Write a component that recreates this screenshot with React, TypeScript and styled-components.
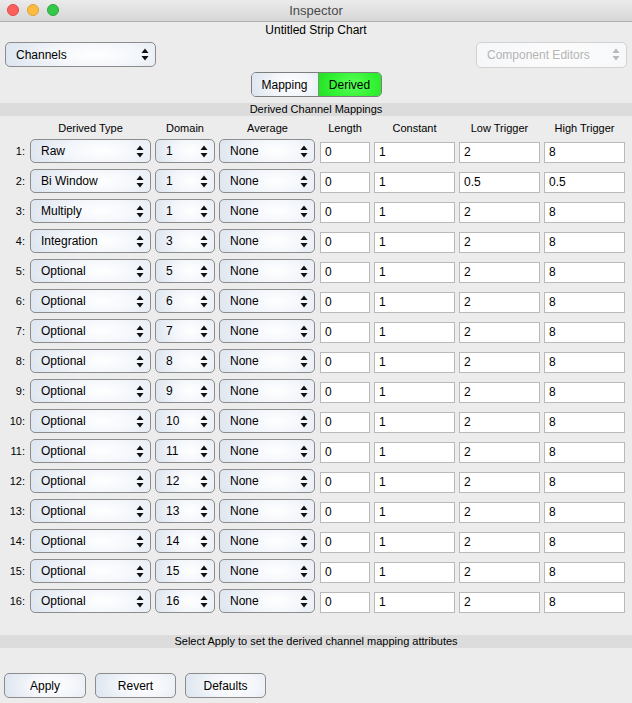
import styled, { createGlobalStyle } from 'styled-components';

const GlobalStyle = createGlobalStyle`
  html, body {
    margin: 0;
    padding: 0;
    background: #ececec;
  }
  body {
    font-family: "Liberation Sans", Arial, Helvetica, sans-serif;
    color: #000;
  }
`;

type Row = {
  type: string;
  domain: string;
  low: string;
  high: string;
};

const rows: Row[] = [
  { type: 'Raw', domain: '1', low: '2', high: '8' },
  { type: 'Bi Window', domain: '1', low: '0.5', high: '0.5' },
  { type: 'Multiply', domain: '1', low: '2', high: '8' },
  { type: 'Integration', domain: '3', low: '2', high: '8' },
  ...Array.from({ length: 12 }, (_, i) => ({
    type: 'Optional',
    domain: String(i + 5),
    low: '2',
    high: '8',
  })),
];

const Arrows = ({ disabled }: { disabled?: boolean }) => (
  <ArrowIcon viewBox="0 0 8 13" $disabled={disabled}>
    <path d="M4 0.5 L7.5 5 H0.5 Z" />
    <path d="M4 12.5 L7.5 8 H0.5 Z" />
  </ArrowIcon>
);

const Popup = ({
  label,
  width,
  height = 24,
  disabled,
}: {
  label: string;
  width: number;
  height?: number;
  disabled?: boolean;
}) => (
  <PopupBox $width={width} $height={height} $disabled={disabled}>
    <span>{label}</span>
    <Arrows disabled={disabled} />
  </PopupBox>
);

const App = () => {
  return (
    <>
      <GlobalStyle />
      <Window>
        <TitleBar>
          <Lights>
            <Light $color="#fc605c" $border="#de4a46" />
            <Light $color="#fdbc40" $border="#dea032" />
            <Light $color="#34c84a" $border="#27aa37" />
          </Lights>
          <WindowTitle>Inspector</WindowTitle>
        </TitleBar>

        <ChartName>Untitled Strip Chart</ChartName>

        <TopBar>
          <Popup label="Channels" width={151} height={25} />
          <Popup label="Component Editors" width={151} height={26} disabled />
        </TopBar>

        <SegmentRow>
          <Segmented>
            <Segment>Mapping</Segment>
            <Segment $active>Derived</Segment>
          </Segmented>
        </SegmentRow>

        <Band>Derived Channel Mappings</Band>

        <Table>
          <span />
          <HeaderCell>Derived Type</HeaderCell>
          <HeaderCell>Domain</HeaderCell>
          <HeaderCell>Average</HeaderCell>
          <HeaderCell>Length</HeaderCell>
          <HeaderCell>Constant</HeaderCell>
          <HeaderCell>Low Trigger</HeaderCell>
          <HeaderCell>High Trigger</HeaderCell>

          {rows.map((r, i) => (
            <Line key={i}>
              <RowLabel>{i + 1}:</RowLabel>
              <Popup label={r.type} width={121} />
              <Popup label={r.domain} width={60} />
              <Popup label="None" width={96} />
              <Field>0</Field>
              <Field>1</Field>
              <Field>{r.low}</Field>
              <Field>{r.high}</Field>
            </Line>
          ))}
        </Table>

        <Band $bottom>Select Apply to set the derived channel mapping attributes</Band>

        <Buttons>
          <Button $width={82}>Apply</Button>
          <Button $width={81}>Revert</Button>
          <Button $width={81}>Defaults</Button>
        </Buttons>
      </Window>
    </>
  );
};

export default App;

const Window = styled.div`
  width: 632px;
  height: 703px;
  background: #ececec;
  display: flex;
  flex-direction: column;
  overflow: hidden;
`;

const TitleBar = styled.div`
  height: 21px;
  flex-shrink: 0;
  position: relative;
  display: flex;
  align-items: center;
  justify-content: center;
  background: linear-gradient(to bottom, #ebebeb, #d6d6d6);
  border-bottom: 1px solid #b1b1b1;
`;

const Lights = styled.div`
  position: absolute;
  left: 7px;
  top: 4px;
  display: flex;
  gap: 8px;
`;

const Light = styled.div<{ $color: string; $border: string }>`
  box-sizing: border-box;
  width: 12px;
  height: 12px;
  border-radius: 50%;
  background: ${p => p.$color};
  border: 0.5px solid ${p => p.$border};
`;

const WindowTitle = styled.div`
  font-size: 13px;
  color: #4a4a4a;
`;

const ChartName = styled.div`
  text-align: center;
  font-size: 12px;
  height: 16px;
  line-height: 16px;
  flex-shrink: 0;
`;

const TopBar = styled.div`
  display: flex;
  justify-content: space-between;
  align-items: center;
  margin-top: 3px;
  padding: 0 5px;
  height: 27px;
  flex-shrink: 0;
`;

const PopupBox = styled.div<{ $width: number; $height: number; $disabled?: boolean }>`
  box-sizing: border-box;
  width: ${p => p.$width}px;
  height: ${p => p.$height}px;
  display: flex;
  align-items: center;
  justify-content: space-between;
  padding: 0 6px 0 10px;
  border: 1px solid ${p => (p.$disabled ? '#d2d2d2' : '#8c8c8c')};
  border-radius: 5px;
  font-size: 12px;
  color: ${p => (p.$disabled ? '#b4b4b4' : '#000')};
  background: ${p =>
    p.$disabled
      ? 'radial-gradient(ellipse 70% 140% at 55% 50%, #fdfdfd 0%, #f3f5f8 100%)'
      : 'radial-gradient(ellipse 70% 130% at 60% 50%, #ffffff 0%, #f2f5fa 45%, #d9e2ed 100%)'};
  flex-shrink: 0;
`;

const ArrowIcon = styled.svg<{ $disabled?: boolean }>`
  width: 8px;
  height: 13px;
  fill: ${p => (p.$disabled ? '#b8b8b8' : '#111')};
`;

const SegmentRow = styled.div`
  display: flex;
  justify-content: center;
  padding: 4px 0 6px;
  flex-shrink: 0;
`;

const Segmented = styled.div`
  display: flex;
  height: 25px;
  border: 1px solid #7e7e7e;
  border-radius: 5px;
  overflow: hidden;
  box-sizing: border-box;
`;

const Segment = styled.div<{ $active?: boolean }>`
  display: flex;
  align-items: center;
  justify-content: center;
  width: ${p => (p.$active ? 62 : 66)}px;
  font-size: 12px;
  border-left: ${p => (p.$active ? '1px solid #6b9c6b' : 'none')};
  background: ${p =>
    p.$active
      ? 'radial-gradient(ellipse 70% 130% at 55% 50%, #5cff5c 0%, #33f233 50%, #22d822 100%)'
      : 'radial-gradient(ellipse 70% 130% at 60% 50%, #ffffff 0%, #f2f5fa 45%, #d9e2ed 100%)'};
`;

const Band = styled.div<{ $bottom?: boolean }>`
  height: 13px;
  line-height: 13px;
  flex-shrink: 0;
  margin-top: ${p => (p.$bottom ? '16px' : '0')};
  background: #dcdcdc;
  text-align: center;
  font-size: 11px;
`;

const Table = styled.div`
  display: grid;
  grid-template-columns: 26px 121px 60px 97px 50px 81px 81px 81px;
  column-gap: 4px;
  grid-template-rows: 23px;
  grid-auto-rows: 30px;
  align-items: start;
  flex-shrink: 0;
`;

const Line = styled.div`
  display: contents;
`;

const HeaderCell = styled.div`
  text-align: center;
  font-size: 11px;
  align-self: center;
`;

const RowLabel = styled.div`
  font-size: 11px;
  line-height: 24px;
  text-align: right;
  padding-right: 1px;
`;

const Field = styled.div`
  box-sizing: border-box;
  height: 21px;
  margin-top: 3px;
  background: #fff;
  border: 1px solid #b9b9b9;
  font-size: 12px;
  line-height: 19px;
  padding-left: 4px;
`;

const Buttons = styled.div`
  display: flex;
  gap: 9px;
  padding: 25px 4px 0 4px;
`;

const Button = styled.div<{ $width: number }>`
  box-sizing: border-box;
  width: ${p => p.$width}px;
  height: 25px;
  display: flex;
  align-items: center;
  justify-content: center;
  border: 1px solid #8c8c8c;
  border-radius: 5px;
  font-size: 12px;
  background: radial-gradient(ellipse 70% 130% at 60% 50%, #ffffff 0%, #f2f5fa 45%, #d9e2ed 100%);
`;
